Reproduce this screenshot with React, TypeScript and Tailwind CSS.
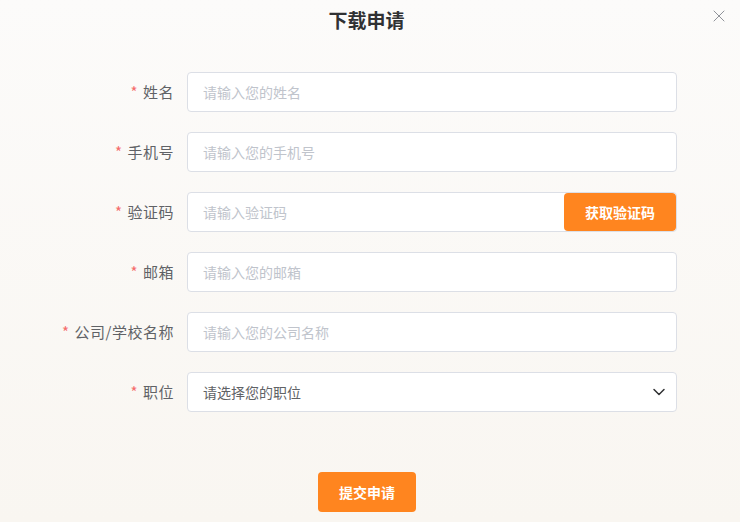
import { ChevronDown, X } from "lucide-react";

const fields = [
  { label: "姓名", placeholder: "请输入您的姓名" },
  { label: "手机号", placeholder: "请输入您的手机号" },
  { label: "验证码", placeholder: "请输入验证码", code: true },
  { label: "邮箱", placeholder: "请输入您的邮箱" },
  { label: "公司/学校名称", placeholder: "请输入您的公司名称" },
];

function Label({ text }: { text: string }) {
  return (
    <label className="w-[174px] shrink-0 text-right text-[15px] tracking-[0.5px] text-[#606266]">
      <span className="text-[#f56c6c] mr-[5px]">*</span>
      {text}
    </label>
  );
}

export default function App() {
  return (
    <div
      className="relative w-[740px] h-[522px] overflow-hidden bg-gradient-to-b from-[#fcfbfa] to-[#f9f6f1] text-[#606266]"
      style={{ fontFamily: '"Noto Sans CJK SC", "Noto Sans", sans-serif' }}
    >
      <h2 className="pt-[7px] pr-[7px] text-center text-[19px] font-bold text-[#303133] leading-[26px]">下载申请</h2>
      <button className="absolute right-[11px] top-[6px] text-[#909399]">
        <X size={20} strokeWidth={1.2} />
      </button>

      <form className="mt-[39px] flex flex-col gap-5">
        {fields.map((f) => (
          <div key={f.label} className="flex items-center">
            <Label text={f.label} />
            <div className="ml-[13px] flex w-[490px] h-10 rounded bg-white border border-[#dcdfe6] overflow-hidden">
              <input
                placeholder={f.placeholder}
                className="flex-1 min-w-0 px-[15px] text-sm outline-none placeholder:text-[#c0c4cc] bg-transparent"
              />
              {f.code && (
                <button
                  type="button"
                  className="w-[112px] h-full rounded bg-[#ff851f] text-white text-sm font-bold"
                >
                  获取验证码
                </button>
              )}
            </div>
          </div>
        ))}

        <div className="flex items-center">
          <Label text="职位" />
          <div className="ml-[13px] flex w-[490px] h-10 items-center justify-between rounded bg-white border border-[#dcdfe6] pl-[15px] pr-[7px] text-sm text-[#606266]">
            <span>请选择您的职位</span>
            <ChevronDown size={20} strokeWidth={1.8} className="text-[#303133]" />
          </div>
        </div>

        <div className="flex justify-center pt-10 pr-[6px]">
          <button
            type="button"
            className="w-[98px] h-10 rounded bg-[#ff851f] text-white text-sm font-bold"
          >
            提交申请
          </button>
        </div>
      </form>
    </div>
  );
}
